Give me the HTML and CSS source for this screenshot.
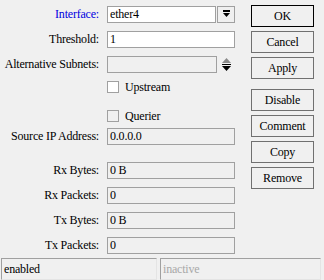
FILE: index.html
```html
<!DOCTYPE html>
<html lang="en">

<head>
    <title>IGMP Snooping Port</title>
    <link rel="stylesheet" href="styles.css">
</head>

<body>
    <div class="window">
        <div class="main">
            <div class="form">
                <div class="row">
                    <span class="label label-blue">Interface:</span>
                    <div class="combo">
                        <span class="field field-white combo-text">ether4</span>
                        <span class="combo-btn">
                            <svg width="9" height="9" viewBox="0 0 9 9">
                                <rect x="1" y="0" width="7" height="2" fill="#000" />
                                <polygon points="1,3 8,3 4.5,7" fill="#000" />
                            </svg>
                        </span>
                    </div>
                </div>
                <div class="row">
                    <span class="label">Threshold:</span>
                    <span class="field field-white">1</span>
                </div>
                <div class="row">
                    <span class="label">Alternative Subnets:</span>
                    <div class="combo">
                        <span class="field field-short"></span>
                        <span class="updown">
                            <svg width="11" height="15" viewBox="0 0 11 15">
                                <polygon points="5.5,1 10,6 1,6" fill="#8a8a8a" />
                                <rect x="1" y="7" width="9" height="1" fill="#000" />
                                <polygon points="1,9 10,9 5.5,14" fill="#000" />
                            </svg>
                        </span>
                    </div>
                </div>
                <div class="row row-check">
                    <span class="label"></span>
                    <label class="check"><span class="box"></span>Upstream</label>
                </div>
                <div class="sep"></div>
                <div class="row row-check row-querier">
                    <span class="label"></span>
                    <label class="check"><span class="box box-off"></span>Querier</label>
                </div>
                <div class="row row-src">
                    <span class="label">Source IP Address:</span>
                    <span class="field">0.0.0.0</span>
                </div>
                <div class="sep"></div>
                <div class="row row-stat">
                    <span class="label">Rx Bytes:</span>
                    <span class="field">0 B</span>
                </div>
                <div class="row">
                    <span class="label">Rx Packets:</span>
                    <span class="field">0</span>
                </div>
                <div class="row">
                    <span class="label">Tx Bytes:</span>
                    <span class="field">0 B</span>
                </div>
                <div class="row">
                    <span class="label">Tx Packets:</span>
                    <span class="field">0</span>
                </div>
            </div>
            <div class="buttons">
                <button class="btn btn-default">OK</button>
                <button class="btn">Cancel</button>
                <button class="btn btn-group-end">Apply</button>
                <button class="btn">Disable</button>
                <button class="btn">Comment</button>
                <button class="btn">Copy</button>
                <button class="btn">Remove</button>
            </div>
        </div>
        <div class="status">
            <span class="status-cell status-left">enabled</span>
            <span class="status-cell status-right">inactive</span>
        </div>
    </div>
</body>

</html>
```

FILE: styles.css
```css
body,
html {
    margin: 0;
    padding: 0;
    background: #f0f0f0;
    font-family: "Liberation Serif", "DejaVu Serif", "Times New Roman", serif;
    font-size: 12px;
    letter-spacing: -0.2px;
    color: #000;
}

.window {
    width: 324px;
    height: 280px;
    display: flex;
    flex-direction: column;
}

.main {
    display: flex;
    height: 258px;
}

.form {
    width: 235px;
    padding-top: 6px;
    display: flex;
    flex-direction: column;
}

.row {
    display: flex;
    align-items: center;
    height: 17px;
    margin-bottom: 8px;
}

.label {
    width: 99px;
    flex: none;
    text-align: right;
    margin-right: 8px;
    white-space: nowrap;
}

.label-blue {
    color: #0000e0;
}

.field {
    box-sizing: border-box;
    height: 17px;
    width: 128px;
    border: 1px solid #a0a0a0;
    padding: 0 2px;
    line-height: 15px;
    background: #f0f0f0;
}

.field-white {
    background: #fff;
}

.combo {
    display: flex;
    align-items: center;
}

.combo-text {
    width: 109px;
}

.combo-btn {
    box-sizing: border-box;
    width: 18px;
    height: 17px;
    margin-left: 1px;
    border: 1px solid #a0a0a0;
    display: flex;
    align-items: center;
    justify-content: center;
}

.field-short {
    width: 110px;
}

.updown {
    margin-left: 4px;
    display: flex;
}

.row-check {
    height: 12px;
}

.row-querier {
    margin-bottom: 6px;
}

.check {
    display: flex;
    align-items: center;
    gap: 6px;
}

.box {
    box-sizing: border-box;
    width: 12px;
    height: 12px;
    border: 1px solid #a0a0a0;
    background: #fff;
}

.box-off {
    background: #f0f0f0;
}

.sep {
    height: 1px;
    background: #d8d8d8;
    margin: 1px 0 8px 8px;
}

.row-src {
    margin-bottom: 8px;
}

.buttons {
    padding-top: 5px;
    margin-left: 16px;
    display: flex;
    flex-direction: column;
    gap: 4px;
}

.btn {
    box-sizing: border-box;
    width: 63px;
    height: 22px;
    background: #f0f0f0;
    border: 1px solid #707070;
    font-family: "Liberation Serif", "DejaVu Serif", "Times New Roman", serif;
    font-size: 12px;
    letter-spacing: -0.2px;
    padding: 0;
    color: #000;
}

.btn-default {
    border-color: #000;
}

.btn-group-end {
    margin-bottom: 6px;
}

.status {
    display: flex;
    height: 22px;
    gap: 3px;
    padding-left: 1px;
}

.status-cell {
    box-sizing: border-box;
    height: 22px;
    border: 1px solid #a0a0a0;
    border-right-color: #e4e4e4;
    border-bottom-color: #e4e4e4;
    padding: 0 2px;
    line-height: 20px;
}

.status-left {
    width: 156px;
}

.status-right {
    width: 161px;
    color: #a8a8a8;
}
```
